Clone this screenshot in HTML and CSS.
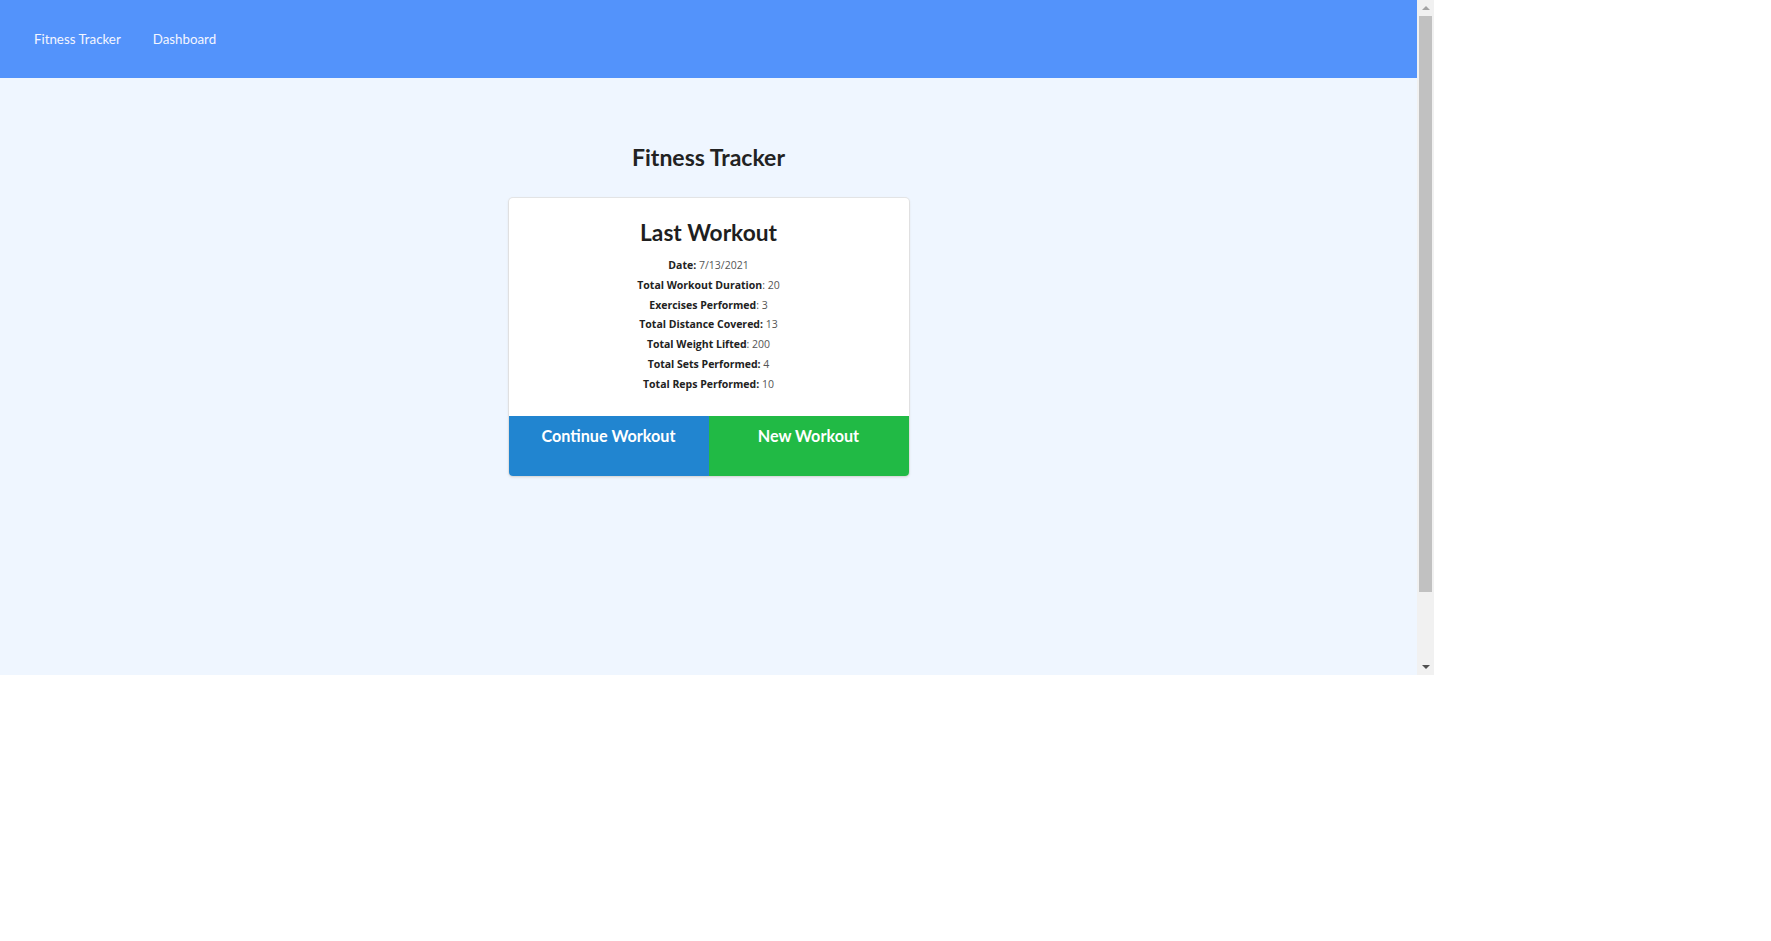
FILE: index.html
```html
<!DOCTYPE html>
<html lang="en">
<head>
<meta charset="utf-8">
<title>Fitness Tracker</title>
<link rel="stylesheet" href="styles.css">
</head>
<body>
<div class="frame">
  <div class="page">
    <nav class="nav">
      <a class="nav-link" href="#">Fitness Tracker</a>
      <a class="nav-link" href="#">Dashboard</a>
    </nav>
    <main class="main">
      <h1 class="title">Fitness Tracker</h1>
      <div class="card">
        <div class="card-content">
          <h2 class="card-header">Last Workout</h2>
          <div class="details">
            <p><strong>Date:</strong> 7/13/2021</p>
            <p><strong>Total Workout Duration</strong>: 20</p>
            <p><strong>Exercises Performed</strong>: 3</p>
            <p><strong>Total Distance Covered:</strong> 13</p>
            <p><strong>Total Weight Lifted</strong>: 200</p>
            <p><strong>Total Sets Performed:</strong> 4</p>
            <p><strong>Total Reps Performed:</strong> 10</p>
          </div>
        </div>
        <div class="buttons">
          <button class="btn btn-blue">Continue Workout</button>
          <button class="btn btn-green">New Workout</button>
        </div>
      </div>
    </main>
  </div>
  <div class="scrollbar">
    <div class="arrow arrow-up"></div>
    <div class="track"><div class="thumb"></div></div>
    <div class="arrow arrow-down"></div>
  </div>
</div>
</body>
</html>
```

FILE: styles.css
```css
html, body {
  margin: 0;
  padding: 0;
  background: #ffffff;
}

.frame {
  width: 1434px;
  height: 675px;
  display: flex;
}

.page {
  flex: 1;
  background: #eff6ff;
  display: flex;
  flex-direction: column;
}

.nav {
  height: 78px;
  background: #5393fb;
  display: flex;
  align-items: center;
  padding-left: 34px;
  gap: 32px;
}

.nav-link {
  font-family: Lato, "Open Sans", sans-serif;
  font-size: 13.3px;
  color: #f4f6ff;
  text-decoration: none;
}

.main {
  display: flex;
  flex-direction: column;
  align-items: center;
  padding-top: 65px;
}

.title {
  margin: 0;
  font-family: Lato, sans-serif;
  font-weight: 700;
  font-size: 23px;
  line-height: 28px;
  color: #222222;
}

.card {
  margin-top: 27px;
  width: 400px;
  background: #ffffff;
  border-radius: 4px;
  box-shadow: 0 1px 3px 0 #d4d4d5, 0 0 0 1px #e6e7e8;
  overflow: hidden;
  display: flex;
  flex-direction: column;
}

.card-content {
  padding: 19px 16px 21px;
  text-align: center;
}

.card-header {
  margin: 0;
  font-family: Lato, sans-serif;
  font-weight: 700;
  font-size: 22.7px;
  line-height: 32px;
  color: #1f1f1f;
}

.details {
  margin-top: 7px;
  font-family: "Open Sans", "Noto Sans", sans-serif;
  font-size: 10.5px;
  line-height: 19.8px;
  color: #555555;
}

.details p {
  margin: 0;
}

.details strong {
  font-weight: 700;
  color: #222222;
}

.buttons {
  display: flex;
  height: 60px;
}

.btn {
  flex: 1;
  border: 0;
  margin: 0;
  padding: 10px 0 0;
  display: flex;
  justify-content: center;
  align-items: flex-start;
  font-family: Lato, sans-serif;
  font-weight: 700;
  font-size: 16.2px;
  line-height: 20px;
  color: #ffffff;
  cursor: pointer;
}

.btn-blue {
  background: #2185d0;
}

.btn-green {
  background: #21ba45;
}

.scrollbar {
  width: 17px;
  background: #f1f1f1;
  display: flex;
  flex-direction: column;
}

.arrow {
  height: 16px;
  display: flex;
  align-items: center;
  justify-content: center;
}

.arrow-up::before {
  content: "";
  border-left: 4px solid transparent;
  border-right: 4px solid transparent;
  border-bottom: 4px solid #a3a3a3;
}

.arrow-down::before {
  content: "";
  border-left: 4px solid transparent;
  border-right: 4px solid transparent;
  border-top: 4px solid #505050;
}

.track {
  flex: 1;
  padding: 0 2px;
}

.thumb {
  height: 576px;
  background: #c1c1c1;
}
```
